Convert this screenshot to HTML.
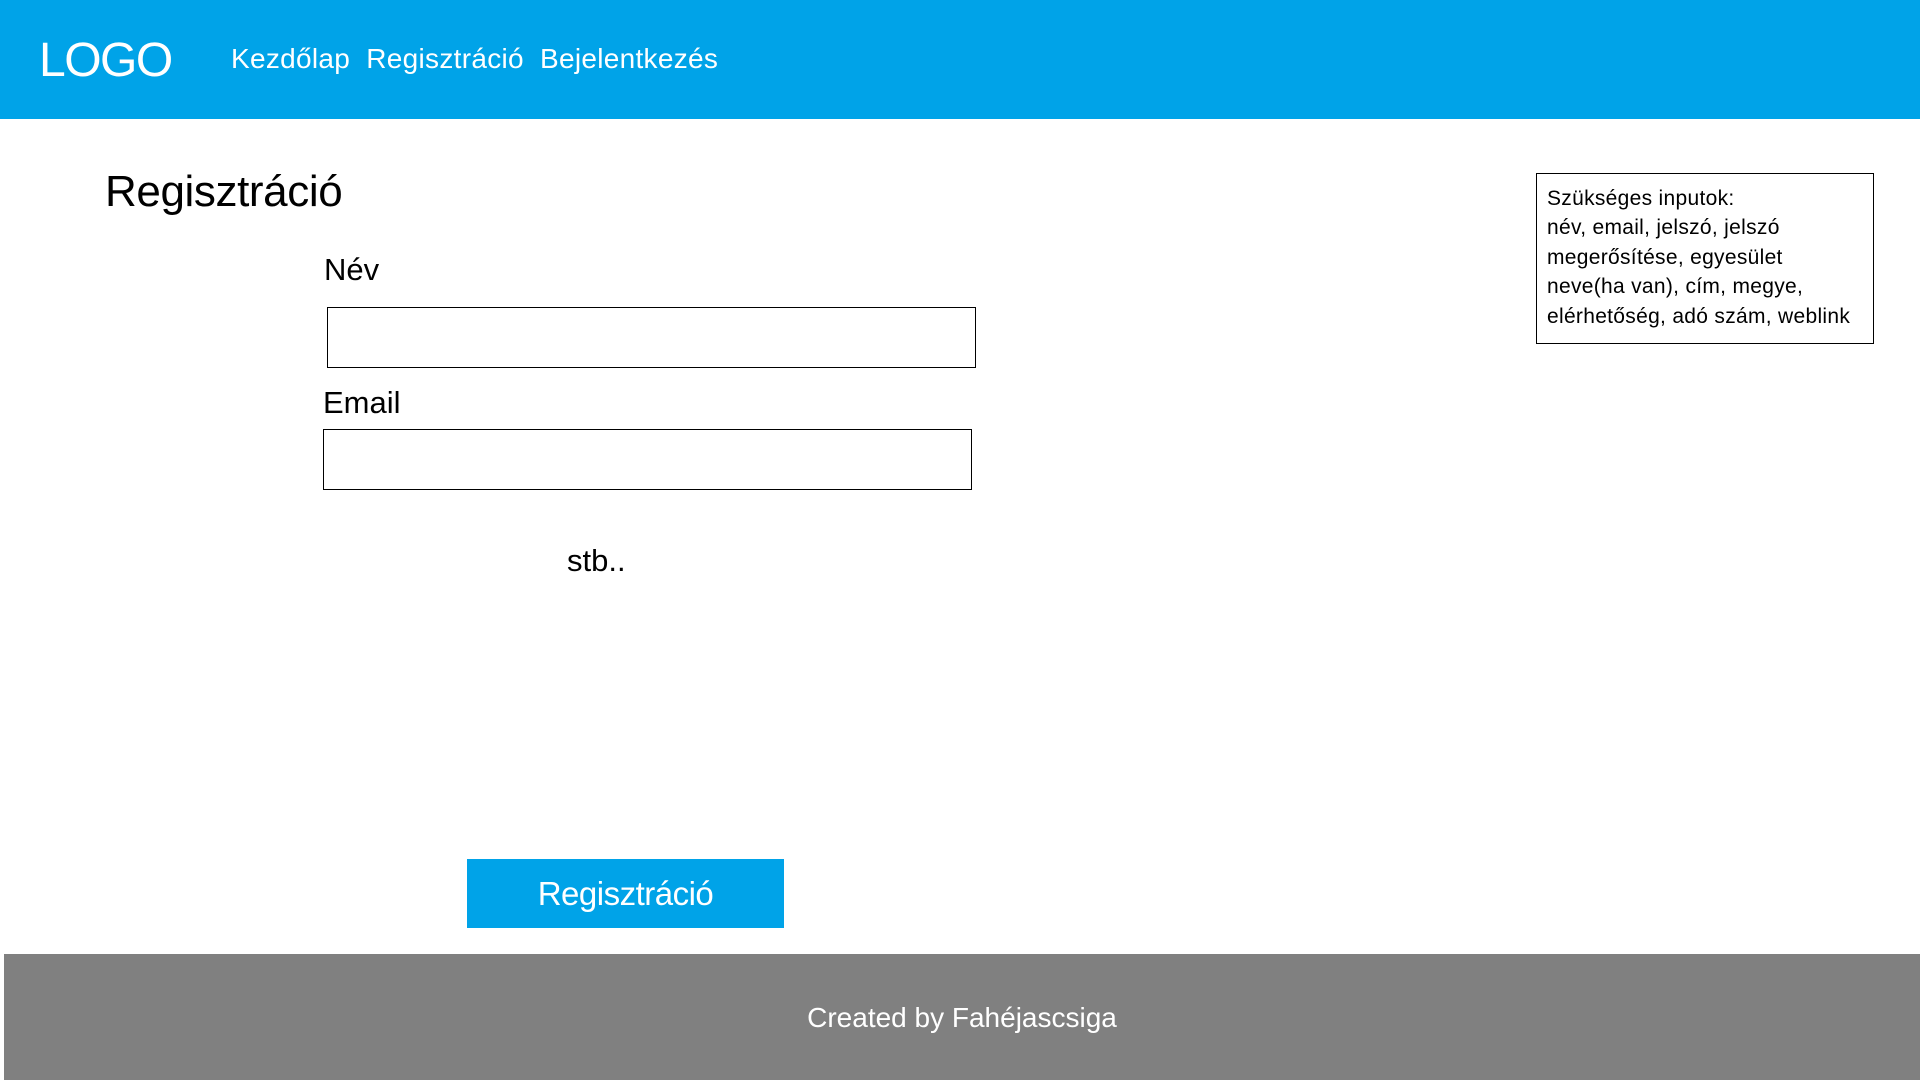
<!DOCTYPE html>
<html><head><meta charset="utf-8"><style>
*{margin:0;padding:0;box-sizing:border-box}
body{width:1920px;height:1080px;position:relative;background:#fff;font-family:"Liberation Sans",sans-serif;overflow:hidden;color:#000}
.a{position:absolute;white-space:nowrap;line-height:1}
#hdr{position:absolute;left:0;top:0;width:1920px;height:119px;background:#00A3E8}
.in{position:absolute;border:1.5px solid #000;background:#fff}
#ftr{position:absolute;left:4px;top:954px;width:1916px;height:126px;background:#808080}
#box{position:absolute;left:1536px;top:173px;width:338px;height:171px;border:1.5px solid #000;padding:10px 0 0 10px;font-size:21px;line-height:29.4px;letter-spacing:0.3px;white-space:nowrap}
</style></head><body>
<div id="hdr"></div>
<div class="a" style="left:39px;top:37px;font-size:48px;color:#fff;letter-spacing:-1.5px">LOGO</div>
<div class="a" style="left:231px;top:45px;font-size:28px;color:#fff;letter-spacing:0.3px;word-spacing:8px">Kezdőlap Regisztráció Bejelentkezés</div>
<div class="a" style="left:105px;top:170px;font-size:44px;letter-spacing:-0.4px">Regisztráció</div>
<div class="a" style="left:324px;top:254px;font-size:31px">Név</div>
<div class="in" style="left:327px;top:307px;width:649px;height:61px"></div>
<div class="a" style="left:323px;top:387px;font-size:31px;letter-spacing:0px">Email</div>
<div class="in" style="left:323px;top:429px;width:649px;height:61px"></div>
<div class="a" style="left:567px;top:545px;font-size:31px">stb..</div>
<div style="position:absolute;left:467px;top:859px;width:317px;height:69px;background:#00A3E8"></div>
<div class="a" style="left:467px;top:877px;width:317px;text-align:center;font-size:33px;color:#fff;letter-spacing:-0.5px">Regisztráció</div>
<div id="ftr"></div>
<div class="a" style="left:4px;top:1004px;width:1916px;text-align:center;font-size:28px;color:#fff;letter-spacing:0px">Created by Fahéjascsiga</div>
<div id="box">Szükséges inputok:<br>név, email, jelszó, jelszó<br>megerősítése, egyesület<br>neve(ha van), cím, megye,<br>elérhetőség, adó szám, weblink</div>
</body></html>
